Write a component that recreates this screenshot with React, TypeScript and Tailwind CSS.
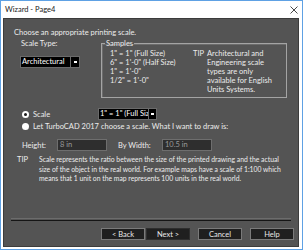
import React from "react";

const font = { fontFamily: 'Lato, "Noto Sans", Arial, sans-serif' };

function Dropdown({ text, width, arrowW = 8 }: { text: string; width: number; arrowW?: number }) {
  return (
    <div
      className="flex h-[12px] bg-black border border-[#6a6a6a] text-white overflow-hidden"
      style={{ width }}
    >
      <div className="flex-1 overflow-hidden whitespace-nowrap leading-[10px] pl-[1px]">{text}</div>
      <div
        className="h-full flex items-center justify-center border-l border-[#6a6a6a] bg-black"
        style={{ width: arrowW }}
      >
        <div className="w-[3px] h-[2px] bg-white" />
      </div>
    </div>
  );
}

function Radio({ checked }: { checked: boolean }) {
  return (
    <div className="w-[7px] h-[7px] rounded-full bg-white flex items-center justify-center">
      {checked && <div className="w-[3px] h-[3px] rounded-full bg-[#1a1a1a]" />}
    </div>
  );
}

function Btn({ label, w = 44, dark }: { label: string; w?: number; dark?: boolean }) {
  return (
    <div
      className={`h-[12px] flex items-center justify-center bg-[#1f1f1f] text-[#e8e8e8] border ${
        dark ? "border-[#2e2e2e]" : "border-[#7a7a7a]"
      }`}
      style={{ width: w }}
    >
      {label}
    </div>
  );
}

export default function App() {
  return (
    <div
      className="w-[303px] h-[250px] bg-white border border-[#5ea1e4] flex flex-col overflow-hidden"
      style={font}
    >
      <div className="h-[17px] flex items-center justify-between pl-[4px] pr-[4px] text-[7.5px] text-[#222]">
        <span>Wizard - Page4</span>
        <svg width="8" height="8" viewBox="0 0 8 8">
          <path d="M0.5 0.5 L7.5 7.5 M7.5 0.5 L0.5 7.5" stroke="#333" strokeWidth="0.9" />
        </svg>
      </div>
      <div className="flex-1 ml-[2px] mr-[3px] mb-[2px] bg-[#545454] border border-[#3c3c3c] flex flex-col text-[7.5px] leading-[9px] text-[#ececec] whitespace-nowrap">
        <div className="pl-[10px] pt-[9px]">Choose an appropriate printing scale.</div>

        <div className="flex mt-[2px] pl-[16px]">
          <div className="w-[60px] flex flex-col">
            <div className="pl-[1px]">Scale Type:</div>
            <div className="mt-[8px]">
              <Dropdown text="Architectural" width={60} arrowW={9} />
            </div>
          </div>
          <fieldset className="ml-[21px] w-[186px] h-[59px] border border-[#a4a4a4] shadow-[inset_1px_1px_0_#6c6c6c]">
            <legend className="ml-[3px] px-[1px] leading-[9px]">Samples</legend>
            <div className="flex mt-[1px] pl-[8px]">
              <div className="w-[83px] flex flex-col">
                <div>1" = 1" (Full Size)</div>
                <div>6" = 1'-0" (Half Size)</div>
                <div>1" = 1'-0"</div>
                <div>1/2" = 1'-0"</div>
              </div>
              <div className="w-[14px]">TIP</div>
              <div className="flex flex-col">
                <div>Architectural and</div>
                <div>Engineering scale</div>
                <div>types are only</div>
                <div>available for English</div>
                <div>Units Systems.</div>
              </div>
            </div>
          </fieldset>
        </div>

        <div className="flex items-center h-[12px] mt-[10px] pl-[18px]">
          <Radio checked />
          <span className="ml-[4px] w-[65px]">Scale</span>
          <Dropdown text={'1" = 1" (Full Size)'} width={59} arrowW={8} />
        </div>
        <div className="flex items-center h-[9px] mt-[2px] pl-[18px]">
          <Radio checked={false} />
          <span className="ml-[4px]">Let TurboCAD 2017 choose a scale. What I want to draw is:</span>
        </div>

        <div className="flex items-center mt-[8px] pl-[18px] h-[12px]">
          <span className="w-[35px]">Height:</span>
          <div className="w-[50px] h-[12px] bg-[#2e2e2e] border border-[#6e6e6e] text-[#9a9a9a] pl-[2px] leading-[10px]">8 in</div>
          <span className="ml-[11px] w-[44px]">By Width:</span>
          <div className="w-[50px] h-[12px] bg-[#2e2e2e] border border-[#6e6e6e] text-[#9a9a9a] pl-[2px] leading-[10px]">10.5 in</div>
        </div>

        <div className="flex mt-[4px] pl-[13px] leading-[9.5px]">
          <div className="w-[22px] shrink-0">TIP</div>
          <div className="flex flex-col text-[6.8px]">
            <div>Scale represents the ratio between the size of the printed drawing and the actual</div>
            <div>size of the object in the real world. For example maps have a scale of 1:100 which</div>
            <div>means that 1 unit on the map represents 100 units in the real world.</div>
          </div>
        </div>

        <div className="mt-auto px-[7px]">
          <div className="h-[1px] bg-[#6c6c6c]" />
          <div className="h-[1px] mt-[1px] bg-[#151515]" />
        </div>
        <div className="flex justify-end mt-[7px] mb-[6px] pr-[4px]">
          <Btn label="< Back" />
          <div className="w-[1px]" />
          <Btn label="Next >" dark />
          <div className="w-[8px]" />
          <Btn label="Cancel" />
          <div className="w-[8px]" />
          <Btn label="Help" />
        </div>
      </div>
    </div>
  );
}
